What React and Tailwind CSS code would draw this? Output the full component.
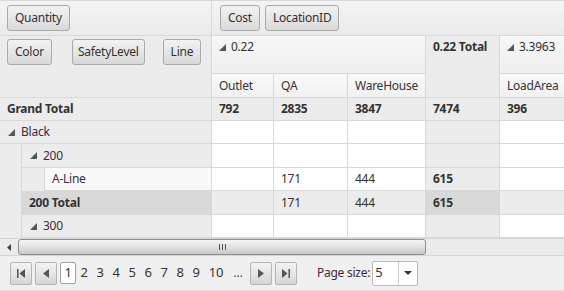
const font = { fontFamily: '"Noto Sans", "Open Sans", sans-serif' };

function Tri({ className = '' }) {
  return (
    <svg width="7" height="7" viewBox="0 0 7 7" className={className}>
      <polygon points="7,0 7,7 0,7" fill="#555" />
    </svg>
  );
}

function FieldButton({ children, className = 'px-[7px]' }) {
  return (
    <div className={`h-[26px] flex items-center rounded-[3px] border border-[#a9a9a9] bg-gradient-to-b from-[#f3f3f3] to-[#d9d9d9] text-[12px] text-[#333] ${className}`}>
      {children}
    </div>
  );
}

function Cell({ children, w, className = '' }) {
  return (
    <div className={`h-full shrink-0 border-r border-[#d8d8d8] flex items-center px-[7px] ${w} ${className}`}>
      {children}
    </div>
  );
}

function DataRow({ cells, rowBg = 'bg-white', totalBg = 'bg-[#ececec]', bold = false }) {
  const cls = bold ? 'font-bold' : '';
  return (
    <div className={`flex h-full ${cls}`}>
      <Cell w="w-[62px]" className={rowBg}>{cells[0]}</Cell>
      <Cell w="w-[74px]" className={rowBg}>{cells[1]}</Cell>
      <Cell w="w-[78px]" className={rowBg}>{cells[2]}</Cell>
      <Cell w="w-[74px]" className={`${totalBg} font-bold`}>{cells[3]}</Cell>
      <Cell w="w-[80px]" className={rowBg}>{cells[4]}</Cell>
    </div>
  );
}

function PagerButton({ children }) {
  return (
    <div className="w-[22px] h-[23px] flex items-center justify-center rounded-[2px] border border-[#b5b5b5] bg-gradient-to-b from-[#f4f4f4] to-[#d6d6d6]">
      {children}
    </div>
  );
}

export default function App() {
  const rows = [
    { label: 'Black', indent: 0, cells: ['', '', '', '', ''], tri: true, h: 'h-[23px]' },
    { label: '200', indent: 1, cells: ['', '', '', '', ''], tri: true, h: 'h-[24px]' },
    { label: 'A-Line', indent: 2, cells: ['', '171', '444', '615', ''], h: 'h-[23px]' },
    { label: '200 Total', indent: 1, cells: ['', '171', '444', '615', ''], total: true, h: 'h-[24px]' },
    { label: '300', indent: 1, cells: ['', '', '', '', ''], tri: true, h: 'h-[23px]' },
  ];

  return (
    <div className="w-[564px] h-[291px] overflow-hidden bg-[#efefef] text-[12px] tracking-[-0.25px] text-[#333] flex flex-col" style={font}>
      {/* ── Filter / column field area ── */}
      <div className="flex h-[36px] border-t border-b border-[#d8d8d8] bg-gradient-to-b from-[#f4f4f4] to-[#ebebeb] shrink-0">
        <div className="w-[212px] shrink-0 border-r border-[#d8d8d8] flex items-center px-[7px]">
          <FieldButton>Quantity</FieldButton>
        </div>
        <div className="flex items-center gap-[5px] px-[8px]">
          <FieldButton>Cost</FieldButton>
          <FieldButton>LocationID</FieldButton>
        </div>
      </div>

      {/* ── Row fields + column headers ── */}
      <div className="flex h-[62px] border-b border-[#d8d8d8] shrink-0">
        <div className="w-[212px] shrink-0 border-r border-[#d8d8d8] bg-[#ececec] flex items-start pt-[3px] px-[7px]">
          <FieldButton>Color</FieldButton>
          <FieldButton className="ml-[20px] px-[5px]">SafetyLevel</FieldButton>
          <FieldButton className="ml-[18px] px-[7px]">Line</FieldButton>
        </div>
        <div className="flex">
          <div className="w-[214px] shrink-0 flex flex-col border-r border-[#d8d8d8]">
            <div className="h-[38px] border-b border-[#d8d8d8] bg-gradient-to-b from-[#f7f7f7] to-[#efefef] flex items-start pt-[2px] px-[7px] gap-[4px]">
              <div className="flex items-center h-[18px] gap-[5px]"><Tri className="mt-[1px]" /><span>0.22</span></div>
            </div>
            <div className="flex-1 flex bg-gradient-to-b from-[#fafafa] to-[#f1f1f1]">
              <Cell w="w-[62px]">Outlet</Cell>
              <Cell w="w-[74px]">QA</Cell>
              <div className="w-[78px] h-full flex items-center px-[7px]">WareHouse</div>
            </div>
          </div>
          <div className="w-[74px] shrink-0 border-r border-[#d8d8d8] bg-[#ececec] font-bold px-[7px] pt-[2px]">
            <div className="h-[18px] flex items-center">0.22 Total</div>
          </div>
          <div className="w-[80px] shrink-0 flex flex-col">
            <div className="h-[38px] border-b border-[#d8d8d8] bg-gradient-to-b from-[#f7f7f7] to-[#efefef] flex items-start pt-[2px] px-[7px]">
              <div className="flex items-center h-[18px] gap-[5px]"><Tri className="mt-[1px]" /><span>3.3963</span></div>
            </div>
            <div className="flex-1 flex items-center px-[7px] bg-gradient-to-b from-[#fafafa] to-[#f1f1f1]">LoadArea</div>
          </div>
        </div>
      </div>

      {/* ── Grand total ── */}
      <div className="flex h-[23px] border-b border-[#d8d8d8] bg-[#ececec] font-bold shrink-0">
        <div className="w-[212px] shrink-0 border-r border-[#d8d8d8] flex items-center px-[7px]">Grand Total</div>
        <DataRow cells={['792', '2835', '3847', '7474', '396']} rowBg="bg-[#ececec]" bold />
      </div>

      {/* ── Body rows ── */}
      <div className="flex flex-col shrink-0">
        {rows.map((r) => {
          const headerBg = r.total ? 'bg-[#d9d9d9]' : r.indent === 2 ? 'bg-[#f9f9f9]' : 'bg-[#ececec]';
          return (
            <div key={r.label} className={`flex ${r.h}`}>
              <div className="w-[212px] shrink-0 flex border-r border-[#d8d8d8] bg-[#ececec]">
                {r.indent >= 1 && <div className="w-[22px] shrink-0 border-r border-[#d8d8d8]" />}
                {r.indent >= 2 && <div className="w-[23px] shrink-0 border-r border-[#d8d8d8]" />}
                <div className={`flex-1 flex items-center gap-[6px] border-b border-[#d8d8d8] ${r.tri ? 'px-[8px]' : 'px-[7px]'} ${headerBg} ${r.total ? 'font-bold' : ''}`}>
                  {r.tri && <Tri />}
                  <span className={r.total ? '' : 'text-[#3f2a3f]'}>{r.label}</span>
                </div>
              </div>
              <div className="border-b border-[#d8d8d8] h-full">
                <DataRow
                  cells={r.cells}
                  rowBg={r.total ? 'bg-[#ececec]' : 'bg-white'}
                  totalBg={r.total ? 'bg-[#d9d9d9]' : 'bg-[#ececec]'}
                />
              </div>
            </div>
          );
        })}
      </div>

      {/* ── Horizontal scrollbar ── */}
      <div className="h-[18px] shrink-0 border-t border-b border-[#d6d6d6] bg-[#ebebeb] flex items-center">
        <div className="w-[18px] flex items-center justify-center">
          <svg width="4" height="7" viewBox="0 0 4 7"><polygon points="4,0 4,7 0,3.5" fill="#444" /></svg>
        </div>
        <div className="w-[408px] h-[16px] rounded-[3px] border border-[#8f8f8f] bg-gradient-to-b from-[#f6f6f6] via-[#e2e2e2] to-[#c9c9c9] flex items-center justify-center gap-[1px]">
          <div className="w-[1px] h-[6px] bg-[#555]" />
          <div className="w-[1px] h-[6px] bg-[#555] ml-[1px]" />
          <div className="w-[1px] h-[6px] bg-[#555] ml-[1px]" />
        </div>
      </div>

      {/* ── Pager ── */}
      <div className="flex-1 flex items-center pl-[10px] bg-[#f0f0f0] border-b border-[#dcdcdc]">
        <div className="flex items-center gap-[3px]">
          <PagerButton>
            <svg width="8" height="9" viewBox="0 0 8 9"><rect x="0" y="0" width="1.5" height="9" fill="#555" /><polygon points="8,0 8,9 2.5,4.5" fill="#555" /></svg>
          </PagerButton>
          <PagerButton>
            <svg width="6" height="9" viewBox="0 0 6 9"><polygon points="6,0 6,9 0,4.5" fill="#555" /></svg>
          </PagerButton>
        </div>
        <div className="flex items-center ml-[3px] text-[13px] text-[#333]">
          <div className="w-[16px] h-[22px] border border-[#a0a0a0] bg-white rounded-[2px] flex items-center justify-center">1</div>
          {['2', '3', '4', '5', '6', '7', '8', '9'].map((n) => (
            <span key={n} className="w-[16px] text-center">{n}</span>
          ))}
          <span className="w-[22px] text-center ml-[1px]">10</span>
          <span className="w-[22px] text-center text-[#555]">...</span>
        </div>
        <div className="flex items-center gap-[3px] ml-[1px]">
          <PagerButton>
            <svg width="6" height="9" viewBox="0 0 6 9"><polygon points="0,0 0,9 6,4.5" fill="#555" /></svg>
          </PagerButton>
          <PagerButton>
            <svg width="8" height="9" viewBox="0 0 8 9"><polygon points="0,0 0,9 5.5,4.5" fill="#555" /><rect x="6.5" y="0" width="1.5" height="9" fill="#555" /></svg>
          </PagerButton>
        </div>
        <span className="ml-[20px] text-[12px] text-[#3f2a3f]">Page size:</span>
        <div className="ml-[2px] w-[46px] h-[25px] bg-white border border-[#b9b9b9] rounded-[2px] flex items-center">
          <span className="flex-1 pl-[2px] text-[13px]">5</span>
          <div className="w-[19px] h-full border-l border-[#d0d0d0] flex items-center justify-center">
            <svg width="8" height="4" viewBox="0 0 8 4"><polygon points="0,0 8,0 4,4" fill="#333" /></svg>
          </div>
        </div>
      </div>
    </div>
  );
}
